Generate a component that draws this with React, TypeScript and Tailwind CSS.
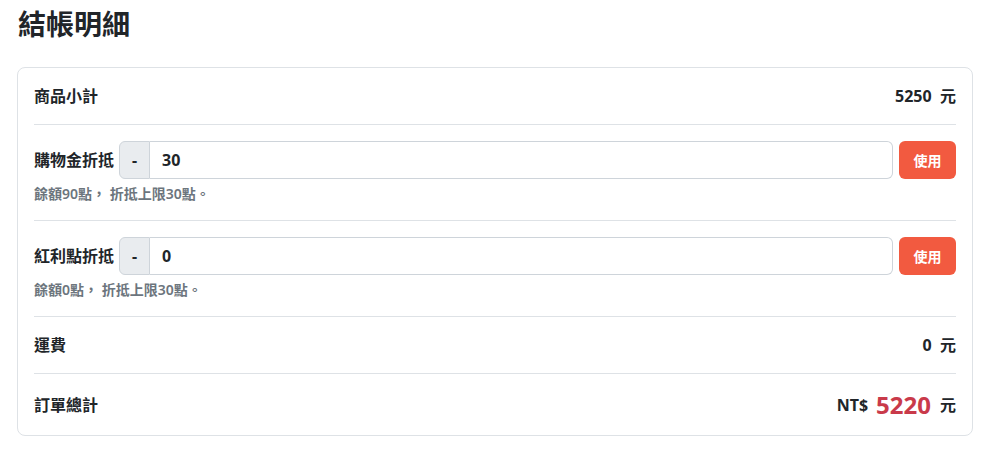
import React from "react";

const font = { fontFamily: '"Noto Sans", "Noto Sans CJK TC", sans-serif' };

function Discount({ label, value, note }: { label: string; value: string; note: string }) {
  return (
    <div className="py-4 border-b border-[#dee2e6]">
      <div className="flex items-center">
        <div className="text-[16px] font-bold text-[#212529] mr-[5px] whitespace-nowrap">{label}</div>
        <div className="flex flex-1 h-[38px]">
          <div className="w-[31px] flex items-center justify-center bg-[#e9ecef] border border-[#ced4da] rounded-l-[6px] text-[16px] font-bold text-[#212529]">-</div>
          <div className="flex-1 flex items-center pl-[12px] border border-l-0 border-[#ced4da] rounded-r-[6px] text-[16px] font-bold text-[#212529]">{value}</div>
        </div>
        <button className="ml-[6px] w-[57px] h-[38px] rounded-[6px] bg-[#f25a40] text-white text-[14px] font-bold">使用</button>
      </div>
      <div className="mt-[4px] text-[14px] leading-[21px] font-semibold text-[#6c757d]">{note}</div>
    </div>
  );
}

export default function App() {
  return (
    <div className="bg-white min-h-[452px] pl-[17px] pr-[21px] pt-[6px]" style={font}>
      <h1 className="text-[28px] leading-[36px] font-bold text-[#212529] pl-[1px] mb-[25px]">結帳明細</h1>
      <div className="border border-[#dee2e6] rounded-[8px] px-4">
        <div className="py-4 border-b border-[#dee2e6] flex items-center justify-between h-[57px]">
          <span className="text-[16px] font-bold text-[#212529]">商品小計</span>
          <span className="text-[16px] font-bold text-[#212529]">5250&nbsp; 元</span>
        </div>
        <Discount label="購物金折抵" value="30" note="餘額90點， 折抵上限30點。" />
        <Discount label="紅利點折抵" value="0" note="餘額0點， 折抵上限30點。" />
        <div className="py-4 border-b border-[#dee2e6] flex items-center justify-between h-[57px]">
          <span className="text-[16px] font-bold text-[#212529]">運費</span>
          <span className="text-[16px] font-bold text-[#212529]">0&nbsp; 元</span>
        </div>
        <div className="flex items-center justify-between h-[61px]">
          <span className="text-[16px] font-bold text-[#212529]">訂單總計</span>
          <span className="flex items-center text-[16px] font-bold text-[#212529]">
            NT$
            <span className="ml-[8px] mr-[9px] text-[24px] font-bold text-[#c93a4a]">5220</span>
            元
          </span>
        </div>
      </div>
    </div>
  );
}
